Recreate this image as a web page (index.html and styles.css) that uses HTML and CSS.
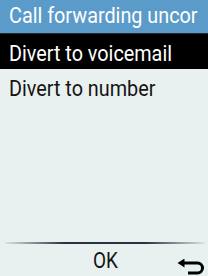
FILE: index.html
```html
<!DOCTYPE html>
<html lang="en">
<head>
    <meta charset="UTF-8">
    <title>Call forwarding</title>
    <link rel="stylesheet" href="styles.css">
</head>
<body>
    <div class="screen">
        <div class="title-bar"><span class="label">Call forwarding uncor</span></div>

        <ul class="menu">
            <li class="menu-item selected"><span class="label">Divert to voicemail</span></li>
            <li class="menu-item"><span class="label">Divert to number</span></li>
        </ul>

        <div class="soft-keys">
            <span class="key-left"></span>
            <span class="key-center"><span class="label">OK</span></span>
            <span class="key-right">
                <!-- back arrow -->
                <svg width="28" height="16" viewBox="0 0 28 16">
                    <path d="M5 4 H20.5 A5 5 0 0 1 20.5 14 H11" fill="none" stroke="#000" stroke-width="3"/>
                    <path d="M0.5 4 L7.5 -0.5 V8.5 Z" fill="#000"/>
                </svg>
            </span>
        </div>
    </div>
</body>
</html>
```

FILE: styles.css
```css
body {
    margin: 0;
    padding: 0;
    background-color: #e9f1f0;
    font-family: Roboto, "Liberation Sans", sans-serif;
}

.screen {
    width: 208px;
    height: 276px;
    display: flex;
    flex-direction: column;
    overflow: hidden;
}

/* device font is condensed, so squeeze Roboto a bit */
.label {
    display: inline-block;
    transform: scaleX(0.9);
    transform-origin: left center;
    white-space: nowrap;
}

.title-bar {
    height: 33px;
    line-height: 31px;
    padding-left: 9px;
    background-color: #5b9bc9;
    border-bottom: 1px solid #1c2a36;
    color: #fff;
    font-size: 22px;
    white-space: nowrap;
    overflow: hidden;
}

.menu {
    list-style: none;
    margin: 0;
    padding: 0;
    flex: 1;
}

.menu-item {
    height: 35px;
    line-height: 31px;
    padding-left: 9px;
    font-size: 22px;
    color: #141414;
    white-space: nowrap;
    overflow: hidden;
    box-sizing: border-box;
}

.menu-item .label {
    padding-top: 4px;
}

.menu-item.selected {
    background-color: #000;
    color: #fff;
}

.soft-keys {
    height: 32px;
    margin: 0 3px 0 5px;
    border-top: 2px solid transparent;
    border-image: linear-gradient(to right, rgba(40, 50, 70, 0.05), #2a3240 30%, #2a3240 70%, rgba(40, 50, 70, 0.05)) 1;
    display: flex;
    align-items: flex-start;
    justify-content: space-between;
}

.key-left {
    width: 28px;
}

.key-center {
    font-size: 22px;
    line-height: 26px;
    margin-top: 4px;
    color: #141414;
}

.key-center .label {
    transform-origin: center;
    transform: scaleX(0.86);
}

.key-right {
    width: 28px;
    height: 16px;
    margin-top: 15px;
}
```
